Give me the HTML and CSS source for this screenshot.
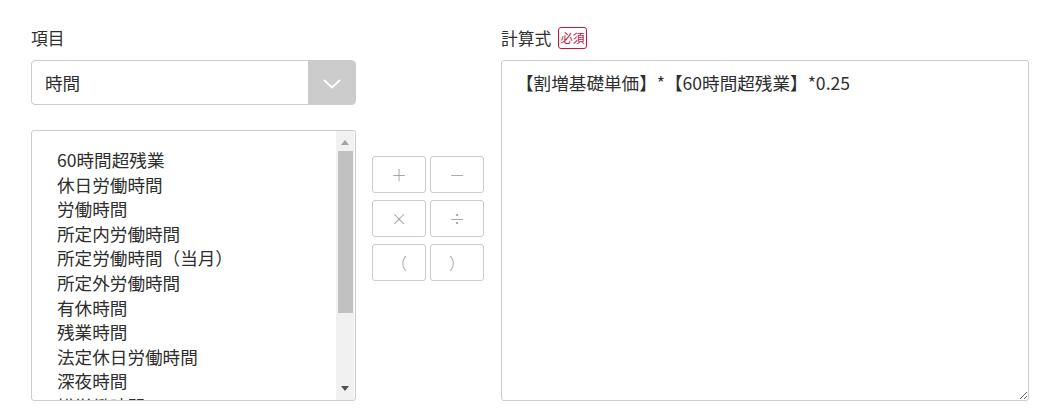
FILE: index.html
```html
<!DOCTYPE html>
<html lang="ja">
<head>
<meta charset="utf-8">
<title>計算式</title>
<link rel="stylesheet" href="styles.css">
</head>
<body>
<div class="page">
  <div class="col-left">
    <div class="label-row"><span class="label">項目</span></div>
    <div class="select">
      <div class="select-value">時間</div>
      <div class="select-arrow">
        <svg width="18" height="10" viewBox="0 0 18 10"><path d="M1 1 L9 8.5 L17 1" fill="none" stroke="#fff" stroke-width="2"/></svg>
      </div>
    </div>
    <div class="listbox">
      <ul class="options">
        <li>60時間超残業</li>
        <li>休日労働時間</li>
        <li>労働時間</li>
        <li>所定内労働時間</li>
        <li>所定労働時間（当月）</li>
        <li>所定外労働時間</li>
        <li>有休時間</li>
        <li>残業時間</li>
        <li>法定休日労働時間</li>
        <li>深夜時間</li>
        <li>総労働時間</li>
      </ul>
      <div class="scrollbar">
        <div class="sb-btn"><span class="tri-up"></span></div>
        <div class="sb-track"><div class="sb-thumb"></div></div>
        <div class="sb-btn"><span class="tri-down"></span></div>
      </div>
    </div>
  </div>
  <div class="col-ops">
    <div class="ops">
      <button class="op">＋</button>
      <button class="op">－</button>
      <button class="op">×</button>
      <button class="op">÷</button>
      <button class="op">（</button>
      <button class="op">）</button>
    </div>
  </div>
  <div class="col-right">
    <div class="label-row"><span class="label">計算式</span><span class="badge">必須</span></div>
    <textarea class="formula">【割増基礎単価】*【60時間超残業】*0.25</textarea>
  </div>
</div>
</body>
</html>
```

FILE: styles.css
```css
html, body {
  margin: 0;
  padding: 0;
  background: #fff;
}
body {
  font-family: "Noto Sans CJK JP", "Noto Sans", sans-serif;
  color: #2e2e2e;
  font-size: 17.6px;
}
.page {
  display: flex;
  align-items: flex-start;
  padding: 27px 0 0 31px;
}
.col-left {
  width: 325px;
  flex: none;
}
.label-row {
  height: 22px;
  display: flex;
  align-items: center;
  margin-bottom: 11px;
}
.label {
  font-size: 16.8px;
  line-height: 22px;
  color: #2e2e2e;
}
.badge {
  margin-left: 7px;
  height: 22px;
  box-sizing: border-box;
  border: 1px solid #c8143c;
  border-radius: 3px;
  color: #c8143c;
  font-size: 12px;
  line-height: 20px;
  padding: 0 1.5px;
}
.select {
  display: flex;
  height: 45px;
  box-sizing: border-box;
  border: 1px solid #ccc;
  border-radius: 4px;
  overflow: hidden;
}
.select-value {
  flex: 1;
  padding-left: 13px;
  line-height: 43px;
}
.select-arrow {
  width: 47px;
  background: #cccccc;
  display: flex;
  align-items: center;
  justify-content: center;
}
.select-arrow svg {
  display: block;
  margin-top: 2px;
}
.listbox {
  margin-top: 25px;
  height: 271px;
  box-sizing: border-box;
  border: 1px solid #ccc;
  border-radius: 3px;
  display: flex;
  overflow: hidden;
}
.options {
  flex: 1;
  list-style: none;
  margin: 0;
  padding: 17px 0 0 25px;
  overflow: hidden;
}
.options li {
  line-height: 24.6px;
  white-space: nowrap;
}
.scrollbar {
  width: 18px;
  margin-right: 1px;
  background: #f1f1f1;
  display: flex;
  flex-direction: column;
}
.sb-btn {
  height: 20px;
  display: flex;
  align-items: center;
  justify-content: center;
  flex: none;
}
.tri-up {
  width: 0;
  height: 0;
  border-left: 4px solid transparent;
  border-right: 4px solid transparent;
  border-bottom: 5px solid #a3a3a3;
  margin-top: 3px;
}
.tri-down {
  width: 0;
  height: 0;
  border-left: 4px solid transparent;
  border-right: 4px solid transparent;
  border-top: 5px solid #505050;
  margin-top: -4px;
}
.sb-track {
  flex: 1;
  padding: 0 1px 0 2px;
}
.sb-thumb {
  height: 162px;
  background: #c1c1c1;
}
.col-ops {
  flex: none;
  margin-left: 16px;
  padding-top: 129px;
}
.ops {
  display: grid;
  grid-template-columns: 54px 54px;
  grid-auto-rows: 37px;
  column-gap: 4px;
  row-gap: 7px;
}
.op {
  margin: 0;
  padding: 0;
  background: #fff;
  border: 1px solid #ccc;
  border-radius: 3px;
  font-family: "Noto Sans CJK JP", sans-serif;
  font-weight: 300;
  font-size: 16px;
  color: #9a9a9a;
  line-height: 35px;
  text-align: center;
}
.col-right {
  flex: none;
  width: 528px;
  margin-left: 17px;
}
.formula {
  display: block;
  width: 528px;
  height: 341px;
  box-sizing: border-box;
  margin: 0;
  border: 1px solid #ccc;
  border-radius: 3px;
  padding: 10px 14px;
  font-family: "Noto Sans CJK JP", sans-serif;
  font-size: 17.6px;
  line-height: 24px;
  color: #2e2e2e;
  resize: both;
  outline: none;
}
```
